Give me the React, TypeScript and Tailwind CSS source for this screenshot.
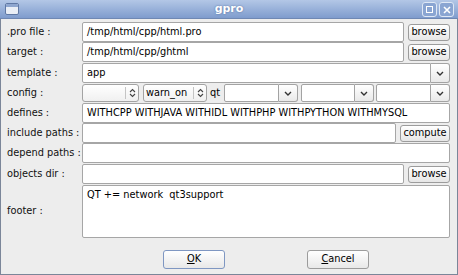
import React from 'react';

const font = { fontFamily: '"DejaVu Sans", Verdana, sans-serif' };

const SpinArrows = () => (
  <svg width="7" height="10" viewBox="0 0 7 10" className="shrink-0">
    <path d="M1 4 L3.5 1.5 L6 4" fill="none" stroke="#444" strokeWidth="1.1" />
    <path d="M1 6 L3.5 8.5 L6 6" fill="none" stroke="#444" strokeWidth="1.1" />
  </svg>
);

const DownChevron = () => (
  <svg width="8" height="5" viewBox="0 0 8 5">
    <path d="M1 1 L4 4 L7 1" fill="none" stroke="#333" strokeWidth="1.4" />
  </svg>
);

// non editable combo : texte + separateur + fleches haut/bas
const SpinCombo = ({ value, w }: { value: string; w: string }) => (
  <div className={`${w} shrink-0 h-[18px] flex items-center bg-gradient-to-b from-white to-[#f0f0f0] border border-[#a3a3a3] rounded-[3px]`}>
    <span className="flex-1 pl-[2px] text-[9.8px] leading-none text-black whitespace-nowrap">{value}</span>
    <span className="w-px h-[12px] bg-[#c4c4c4]" />
    <span className="w-[12px] flex justify-center"><SpinArrows /></span>
  </div>
);

// editable combo : champ blanc + bouton fleche a droite
const EditCombo = ({ w }: { w: string }) => (
  <div className={`${w} h-[18px] flex`}>
    <div className="flex-1 bg-white border border-[#a3a3a3] rounded-l-[2px]" />
    <div className="w-[19px] flex items-center justify-center bg-gradient-to-b from-white to-[#e9e9e9] border border-[#a3a3a3] border-l-0 rounded-r-[3px]">
      <DownChevron />
    </div>
  </div>
);

const Input = ({ value = '', w = 'flex-1' }: { value?: string; w?: string }) => (
  <div className={`${w} h-[20px] flex items-center bg-white border border-[#a6a6a6] rounded-[2px] pl-[4px] text-[9.8px] text-black whitespace-pre overflow-hidden`}>
    {value}
  </div>
);

const SmallButton = ({ label, w }: { label: string; w: string }) => (
  <div className={`${w} h-[17px] flex items-center justify-center bg-gradient-to-b from-white to-[#e6e6e6] border border-[#9c9c9c] rounded-[3px] text-[9.8px] text-black`}>
    {label}
  </div>
);

const Row = ({ label, children, extra = '' }: { label: string; children: React.ReactNode; extra?: string }) => (
  <div className={`flex items-center h-[20px] ${extra}`}>
    <div className="w-[75px] shrink-0 text-[9.8px] text-[#111] whitespace-nowrap">{label}</div>
    <div className="flex-1 flex items-center">{children}</div>
  </div>
);

export default function App() {
  return (
    <div style={font} className="w-[458px] h-[275px] flex flex-col bg-[#ededed] overflow-hidden select-none">
      {/* barre de titre */}
      <div className="h-[19px] shrink-0 relative flex items-center justify-center bg-gradient-to-b from-[#b3c7e6] to-[#7f9ccd] border-b border-[#6f88b3]">
        <div className="absolute left-[5px] top-[3px] w-[14px] h-[12px] rounded-[2px] border border-[#5f78a4] bg-[#e9eef6] overflow-hidden">
          <div className="h-[3px] bg-[#8ea6cf]" />
        </div>
        <span className="text-[11px] font-bold text-white [text-shadow:0_0_2px_#4d6a9c]">gpro</span>
        <div className="absolute right-[21px] top-[2px] w-[15px] h-[15px] rounded-[3px] border border-[#dfe8f5] bg-[#8aa5d2] flex items-center justify-center">
          <div className="w-[7px] h-[7px] border border-white" />
        </div>
        <div className="absolute right-[4px] top-[2px] w-[15px] h-[15px] rounded-[3px] border border-[#dfe8f5] bg-[#8aa5d2] flex items-center justify-center">
          <svg width="8" height="8" viewBox="0 0 8 8">
            <path d="M1 1 L7 7 M7 1 L1 7" stroke="white" strokeWidth="1.6" />
          </svg>
        </div>
      </div>

      {/* corps */}
      <div className="flex-1 flex flex-col pl-[6px] pr-[7px] pt-[3px] border-x border-b border-[#7b8699]">
        <Row label=".pro file :">
          <Input value="/tmp/html/cpp/html.pro" />
          <div className="ml-[4px]"><SmallButton label="browse" w="w-[42px]" /></div>
        </Row>
        <Row label="target :">
          <Input value="/tmp/html/cpp/ghtml" />
          <div className="ml-[4px]"><SmallButton label="browse" w="w-[42px]" /></div>
        </Row>
        <Row label="template :" extra="mt-px">
          <div className="flex-1 h-[20px] flex">
            <div className="flex-1 flex items-center bg-white border border-[#a6a6a6] rounded-l-[2px] pl-[4px] text-[9.8px] text-black">app</div>
            <div className="w-[19px] flex items-center justify-center bg-gradient-to-b from-white to-[#e9e9e9] border border-[#a3a3a3] border-l-0 rounded-r-[3px]">
              <DownChevron />
            </div>
          </div>
        </Row>
        <Row label="config :">
          <SpinCombo value="" w="w-[57px]" />
          <div className="ml-[4px] shrink-0"><SpinCombo value="warn_on" w="w-[64px]" /></div>
          <span className="ml-[3px] text-[9.8px] text-black">qt</span>
          <div className="ml-[4px]"><EditCombo w="w-[74px]" /></div>
          <div className="ml-[3px]"><EditCombo w="w-[73px]" /></div>
          <div className="ml-[2px] flex-1 flex"><EditCombo w="flex-1" /></div>
        </Row>
        <Row label="defines :">
          <Input value="WITHCPP WITHJAVA WITHIDL WITHPHP WITHPYTHON WITHMYSQL" />
        </Row>
        <Row label="include paths :">
          <Input />
          <div className="ml-[4px]"><SmallButton label="compute" w="w-[50px]" /></div>
        </Row>
        <Row label="depend paths :">
          <Input />
        </Row>
        <Row label="objects dir :" extra="mt-px">
          <Input />
          <div className="ml-[4px]"><SmallButton label="browse" w="w-[42px]" /></div>
        </Row>
        <div className="flex items-center h-[53px] mt-[1px]">
          <div className="w-[75px] shrink-0 text-[9.8px] text-[#111]">footer :</div>
          <div className="flex-1 h-full bg-white border border-[#a6a6a6] rounded-[2px] px-[4px] pt-[2px] text-[9.8px] text-black whitespace-pre">
            QT += network  qt3support
          </div>
        </div>
        <div className="flex gap-[82px] mt-[12px] pl-[156px]">
          <div className="w-[62px] h-[19px] flex items-center justify-center bg-gradient-to-b from-white to-[#e8e8e8] border border-[#7f97c2] rounded-[3px] text-[9.8px] text-black">
            <span><span className="underline">O</span>K</span>
          </div>
          <div className="w-[62px] h-[19px] flex items-center justify-center bg-gradient-to-b from-white to-[#e8e8e8] border border-[#9c9c9c] rounded-[3px] text-[9.8px] text-black">
            <span><span className="underline">C</span>ancel</span>
          </div>
        </div>
      </div>
    </div>
  );
}
